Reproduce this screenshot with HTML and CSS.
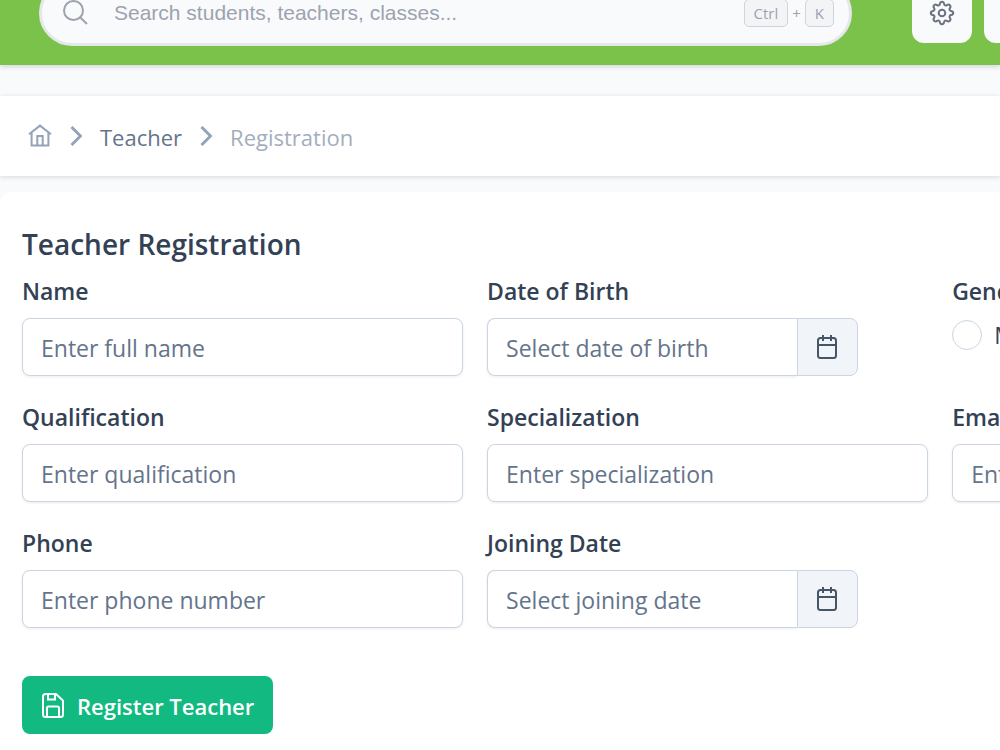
FILE: index.html
```
<!DOCTYPE html>
<html lang="en">
<head>
<meta charset="UTF-8" />
<meta name="viewport" content="width=device-width, initial-scale=1" />
<title>Teacher Registration</title>
<link rel="stylesheet" href="styles.css">
</head>
<body>

<header class="topbar">
  <div class="search">
    <svg class="search-icon" viewBox="0 0 26 26" aria-hidden="true"><circle cx="11.5" cy="10.5" r="9.5"/><path d="M18.300 17.500l6.700 6.500"/></svg>
    <input type="search" placeholder="Search students, teachers, classes..." aria-label="Search">
    <div class="shortcut"><kbd>Ctrl</kbd><span>+</span><kbd>K</kbd></div>
  </div>
  <div class="topbar-actions">
    <button type="button" class="icon-btn" aria-label="Settings">
      <svg viewBox="0 0 26 26" aria-hidden="true"><path d="M10.9 3.9 C11.4 1.1 14.6 1.1 15.1 3.9 C15.4 5.5 16.6 6 17.9 5.1 C20.2 3.5 22.5 5.8 20.9 8.1 C20 9.4 20.5 10.6 22.1 10.9 C24.9 11.4 24.9 14.6 22.1 15.1 C20.5 15.4 20 16.6 20.9 17.9 C22.5 20.2 20.2 22.5 17.9 20.9 C16.6 20 15.4 20.5 15.1 22.1 C14.6 24.9 11.4 24.9 10.9 22.1 C10.6 20.5 9.4 20 8.1 20.9 C5.8 22.5 3.5 20.2 5.1 17.9 C6 16.6 5.5 15.4 3.9 15.1 C1.1 14.6 1.1 11.4 3.9 10.9 C5.5 10.6 6 9.4 5.1 8.1 C3.5 5.8 5.8 3.5 8.1 5.1 C9.4 6 10.6 5.5 10.9 3.9 Z"/><circle cx="13" cy="13" r="3.3"/></svg>
    </button>
    <button type="button" class="icon-btn" aria-label="Notifications"></button>
  </div>
</header>

<nav class="breadcrumb" aria-label="Breadcrumb">
  <a href="#" aria-label="Home">
    <svg class="home" viewBox="0 0 24 24" aria-hidden="true"><path d="M1 10.3L12 1.6l11 8.7M3.6 8.5v12.9h16.8V8.5M9.3 21v-9h5.4v9"/></svg>
  </a>
  <svg class="chevron" viewBox="0 0 12 20" aria-hidden="true"><path d="M1.5 1l9 9-9 9"/></svg>
  <a class="crumb" href="#">Teacher</a>
  <svg class="chevron" viewBox="0 0 12 20" aria-hidden="true"><path d="M1.5 1l9 9-9 9"/></svg>
  <span class="crumb current">Registration</span>
</nav>

<main class="panel">
  <h1>Teacher Registration</h1>
  <form>
    <div class="form-grid">
      <div class="field">
        <label for="name">Name</label>
        <input type="text" id="name" placeholder="Enter full name">
      </div>
      <div class="field">
        <label for="dob">Date of Birth</label>
        <div class="date-group">
          <input type="text" id="dob" placeholder="Select date of birth">
          <button type="button" aria-label="Choose date of birth">
            <svg viewBox="0 0 24 26" aria-hidden="true"><rect x="3" y="4" width="18" height="20" rx="2.5"/><path d="M3 11h18M8 1v6M16 1v6"/></svg>
          </button>
        </div>
      </div>
      <fieldset class="field">
        <legend>Gender</legend>
        <div class="radios">
          <input type="radio" name="gender" id="male"><label for="male">Male</label>
        </div>
      </fieldset>

      <div class="field">
        <label for="qualification">Qualification</label>
        <input type="text" id="qualification" placeholder="Enter qualification">
      </div>
      <div class="field">
        <label for="specialization">Specialization</label>
        <input type="text" id="specialization" placeholder="Enter specialization">
      </div>
      <div class="field">
        <label for="email">Email</label>
        <input type="email" id="email" placeholder="Enter email">
      </div>

      <div class="field">
        <label for="phone">Phone</label>
        <input type="tel" id="phone" placeholder="Enter phone number">
      </div>
      <div class="field">
        <label for="joining">Joining Date</label>
        <div class="date-group">
          <input type="text" id="joining" placeholder="Select joining date">
          <button type="button" aria-label="Choose joining date">
            <svg viewBox="0 0 24 26" aria-hidden="true"><rect x="3" y="4" width="18" height="20" rx="2.5"/><path d="M3 11h18M8 1v6M16 1v6"/></svg>
          </button>
        </div>
      </div>
    </div>

    <button type="submit" class="btn-register">
      <svg viewBox="0 0 24 26" aria-hidden="true"><path d="M4.5 2h10.500L22 8.600V22.500a2.500 2.500 0 0 1-2.500 2.500H4.500A2.500 2.500 0 0 1 2 22.500V4.500A2.500 2.500 0 0 1 4.500 2zM7 2v5.500h7V2M6 25V16a1.500 1.500 0 0 1 1.500-1.500h9A1.500 1.500 0 0 1 18 16V25"/></svg>
      <span>Register Teacher</span>
    </button>
  </form>
</main>

</body>
</html>
```
FILE: styles.css
```
* {
  box-sizing: border-box;
}
body {
  font-family: "Open Sans", "Noto Sans", sans-serif;
  font-size: 23px;
  margin: 0;
  background: #f8fafc;
  color: #334155;
  overflow-x: hidden;
}
input, button, kbd {
  font: inherit;
}
svg {
  display: block;
  fill: none;
  stroke: currentColor;
  stroke-width: 2;
}

/* Top bar, scrolled partly out of view */
.topbar {
  display: flex;
  align-items: center;
  gap: 60px;
  margin-top: -39px;
  padding: 19px 0 19px 39px;
  background: #7ac24a;
  box-shadow: 0 1px 6px #0f172a33;
}
.search {
  display: flex;
  flex: 1;
  align-items: center;
  min-width: 0;
  height: 66px;
  padding: 0 15px 0 20px;
  background: #f9fafc;
  border: 3px solid #e5e7eb;
  border-radius: 33px;
}
.search-icon {
  width: 26px;
  height: 26px;
  color: #9ca3af;
}
.search input {
  flex: 1;
  min-width: 0;
  margin-left: 26px;
  padding: 0;
  border: none;
  outline: none;
  background: none;
  font-family: "Liberation Sans", Arial, sans-serif;
  font-size: 21px;
}
.search input::placeholder {
  color: #9ca3af;
}
.shortcut {
  display: flex;
  align-items: center;
  gap: 4px;
  font-size: 15px;
  color: #9ca3af;
}
.shortcut kbd {
  height: 28px;
  padding: 0 9px;
  line-height: 26px;
  background: #f3f4f6;
  border: 1px solid #d1d5db;
  border-radius: 5px;
}
.topbar-actions {
  display: flex;
  gap: 12px;
  margin-right: -44px;
}
.icon-btn {
  display: grid;
  place-items: center;
  width: 60px;
  height: 60px;
  padding: 0;
  background: #f9fafc;
  border: none;
  border-radius: 12px;
  color: #6b7280;
}
.icon-btn svg {
  width: 26px;
  height: 26px;
}

/* Breadcrumb */
.breadcrumb {
  display: flex;
  align-items: center;
  gap: 18px;
  height: 80px;
  margin: 31px 0 16px;
  padding: 0 28px;
  background: #fff;
  font-size: 22px;
  box-shadow: 0 1px 5px #0f172a24;
}
.breadcrumb a {
  color: #64748b;
  text-decoration: none;
}
.breadcrumb .crumb {
  padding-top: 2px;
}
.breadcrumb .home {
  width: 24px;
  height: 24px;
  color: #94a3b8;
}
.chevron {
  width: 12px;
  height: 20px;
  color: #94a3b8;
  stroke-width: 3;
}
.breadcrumb .current {
  color: #a3aebd;
}

/* Form */
.panel {
  padding: 32px 0 16px 22px;
  background: #fff;
  border-radius: 12px 0 0 0;
  overflow-x: hidden;
}
h1 {
  margin: 0 0 10px;
  font-size: 28px;
  line-height: 40px;
  font-weight: 600;
}
.form-grid {
  display: grid;
  grid-template-columns: repeat(3, 45.1%);
  gap: 24px;
}
.field {
  min-width: 0;
  margin: 0;
  padding: 0;
  border: none;
}
.field > label, legend {
  display: block;
  margin-bottom: 10px;
  padding: 0;
  line-height: 34px;
  font-weight: 600;
}
.field input:not([type="radio"]) {
  width: 100%;
  height: 58px;
  padding: 2px 18px 0;
  border: 1px solid #cbd5e1;
  border-radius: 8px;
  background: #fff;
  color: #334155;
  box-shadow: 0 1px 3px #0f172a14;
}
.field input::placeholder {
  color: #64748b;
  opacity: 1;
}
.date-group {
  display: flex;
  width: 84%;
}
.date-group input:not([type="radio"]) {
  flex: 1;
  min-width: 0;
  border-right: none;
  border-radius: 8px 0 0 8px;
}
.date-group button {
  display: grid;
  place-items: center;
  width: 61px;
  padding: 0;
  background: #f1f5f9;
  border: 1px solid #cbd5e1;
  border-radius: 0 8px 8px 0;
  color: #475569;
}
.date-group svg {
  width: 24px;
  height: 26px;
}
.radios {
  display: flex;
  align-items: center;
  gap: 12px;
  height: 34px;
}
.radios input {
  appearance: none;
  width: 30px;
  height: 30px;
  margin: 0;
  border: 1px solid #cbd5e1;
  border-radius: 50%;
  background: #fff;
}
.btn-register {
  display: flex;
  align-items: center;
  gap: 12px;
  height: 58px;
  margin-top: 48px;
  padding: 0 19px;
  background: #12b981;
  border: none;
  border-radius: 8px;
  color: #fff;
  font-size: 22px;
  font-weight: 600;
}
.btn-register span {
  padding-top: 2px;
}
.btn-register svg {
  width: 24px;
  height: 26px;
}
```
